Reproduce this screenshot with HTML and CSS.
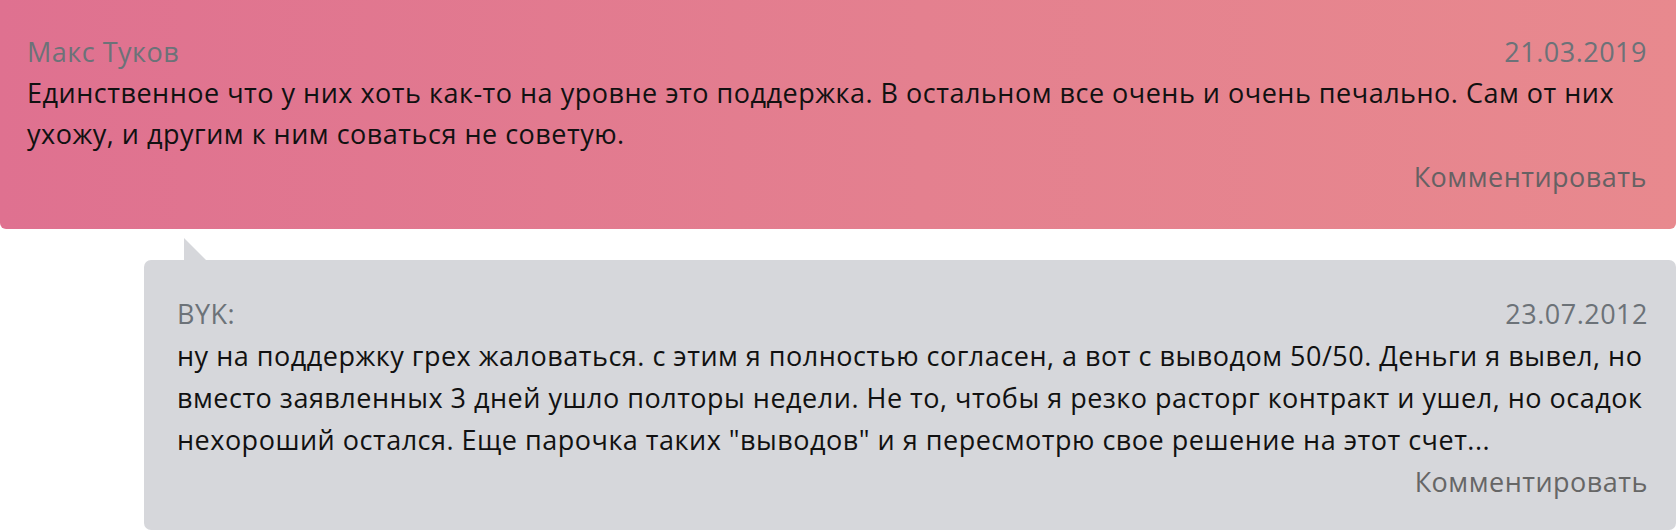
FILE: index.html
```html
<!DOCTYPE html>
<html lang="ru">
<head>
<meta charset="utf-8">
<title>Комментарии</title>
<link rel="stylesheet" href="styles.css">
</head>
<body>
<div class="thread">
  <div class="comment comment--main">
    <div class="comment__head">
      <span class="comment__author">Макс Туков</span>
      <span class="comment__date">21.03.2019</span>
    </div>
    <div class="comment__text">Единственное что у них хоть как-то на уровне это поддержка. В остальном все очень и очень печально. Сам от них ухожу, и другим к ним соваться не советую.</div>
    <div class="comment__actions"><a class="comment__reply" href="#">Комментировать</a></div>
  </div>
  <div class="comment comment--answer">
    <div class="comment__head">
      <span class="comment__author">BYK:</span>
      <span class="comment__date">23.07.2012</span>
    </div>
    <div class="comment__text">ну на поддержку грех жаловаться. с этим я полностью согласен, а вот с выводом 50/50. Деньги я вывел, но вместо заявленных 3 дней ушло полторы недели. Не то, чтобы я резко расторг контракт и ушел, но осадок нехороший остался. Еще парочка таких "выводов" и я пересмотрю свое решение на этот счет...</div>
    <div class="comment__actions"><a class="comment__reply" href="#">Комментировать</a></div>
  </div>
</div>
</body>
</html>
```
FILE: styles.css
```css
html, body {
  margin: 0;
  padding: 0;
  background: #ffffff;
}
body {
  font-family: "Open Sans", "Noto Sans", sans-serif;
  font-size: 27px;
  letter-spacing: 0.5px;
  color: #111111;
}
.thread {
  width: 1676px;
  display: flex;
  flex-direction: column;
}
.comment {
  display: flex;
  flex-direction: column;
}
.comment--main {
  background: linear-gradient(90deg, #df7190 0%, #e4808f 55%, #e8898e 100%);
  border-radius: 0 0 6px 6px;
  padding: 31px 29px 32px 27px;
  line-height: 41px;
}
.comment--answer {
  position: relative;
  margin: 31px 0 0 144px;
  background: #d6d7db;
  border-radius: 7px;
  padding: 33px 28px 27px 33px;
  line-height: 42px;
}
.comment--answer::before {
  content: "";
  position: absolute;
  left: 40px;
  top: -22px;
  width: 0;
  height: 0;
  border-left: 22px solid #d6d7db;
  border-top: 22px solid transparent;
}
.comment__head {
  display: flex;
  justify-content: space-between;
}
.comment__author,
.comment__date {
  color: #6c7278;
}
.comment__actions {
  display: flex;
  justify-content: flex-end;
}
.comment--main .comment__actions {
  margin-top: 2px;
}
.comment__reply {
  color: #666163;
  text-decoration: none;
}
.comment--answer .comment__reply {
  color: #666666;
}
```
